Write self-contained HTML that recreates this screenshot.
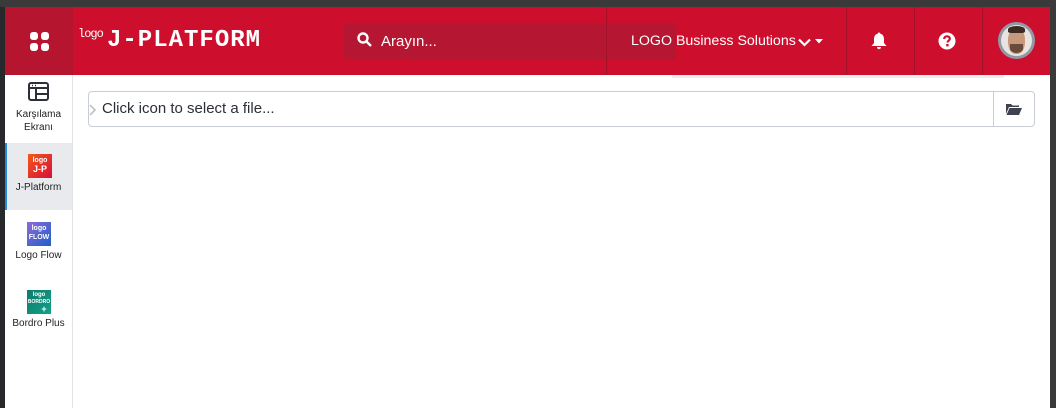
<!DOCTYPE html>
<html><head><meta charset="utf-8"><style>
*{margin:0;padding:0;box-sizing:border-box}
body{width:1056px;height:408px;overflow:hidden;background:#fff;font-family:"Liberation Sans",sans-serif;position:relative}
.abs{position:absolute}
</style></head><body>
<div class="abs" style="left:0;top:0;width:1056px;height:7px;background:#3a3a3a"></div>
<div class="abs" style="left:0;top:7px;width:5px;height:401px;background:#26282b"></div>
<div class="abs" style="left:1050px;top:7px;width:6px;height:401px;background:#3a3a3a"></div>
<!-- header -->
<div class="abs" style="left:5px;top:7px;width:1045px;height:68px;background:#cd0e2d"></div>
<div class="abs" style="left:5px;top:7px;width:68px;height:68px;background:#b5152f"></div>
<svg class="abs" style="left:30px;top:32px" width="19" height="19" viewBox="0 0 19 19" fill="#fff">
<rect x="0" y="0" width="8" height="8" rx="3"/><rect x="11" y="0" width="8" height="8" rx="3"/><rect x="0" y="11" width="8" height="8" rx="3"/><rect x="11" y="11" width="8" height="8" rx="3"/></svg>
<div class="abs" style="left:78px;top:27px;color:#fff;font-size:12px;font-family:'Liberation Mono',monospace;letter-spacing:-1px">logo</div>
<div class="abs" style="left:107px;top:27px;color:#fff;font-size:24px;font-weight:bold;font-family:'Liberation Mono',monospace;letter-spacing:1px;line-height:28px">J-PLATFORM</div>
<div class="abs" style="left:344px;top:23px;width:332px;height:36px;background:#b51632;border-radius:4px"></div>
<svg class="abs" style="left:357px;top:32px" width="15" height="15" viewBox="0 0 15 15" fill="none" stroke="#fff" stroke-width="2.4"><circle cx="6" cy="6" r="4.5"/><path d="M9.5 9.5L14 14"/></svg>
<div class="abs" style="left:381px;top:33px;color:#fff;font-size:15px">Arayın...</div>
<div class="abs" style="left:606px;top:7px;width:1px;height:68px;background:#a4102a"></div>
<div class="abs" style="left:846px;top:7px;width:1px;height:68px;background:#a4102a"></div>
<div class="abs" style="left:914px;top:7px;width:1px;height:68px;background:#a4102a"></div>
<div class="abs" style="left:982px;top:7px;width:1px;height:68px;background:#a4102a"></div>
<div class="abs" style="left:631px;top:33px;color:#fff;font-size:14.2px">LOGO Business Solutions</div>
<svg class="abs" style="left:798px;top:38px" width="13" height="9" viewBox="0 0 13 9" fill="none" stroke="#fff" stroke-width="2.2"><path d="M1 1.5L6.5 7L12 1.5"/></svg>
<svg class="abs" style="left:815px;top:39px" width="8" height="5" viewBox="0 0 8 5" fill="#fff"><path d="M0 0H8L4 4.5Z"/></svg>
<svg class="abs" style="left:871px;top:32px" width="16" height="18" viewBox="0 0 16 18" fill="#fff"><path d="M8 0.5C8.8 0.5 9.3 1.1 9.3 1.8C12 2.4 13 4.5 13 7.5V11L15.5 14H0.5L3 11V7.5C3 4.5 4 2.4 6.7 1.8C6.7 1.1 7.2 0.5 8 0.5Z"/><path d="M6 15H10C10 16.3 9.1 17.2 8 17.2S6 16.3 6 15Z"/></svg>
<svg class="abs" style="left:938px;top:32px" width="18" height="18" viewBox="0 0 18 18"><circle cx="9" cy="9" r="8.5" fill="#fff"/><path d="M6.2 7C6.2 5.3 7.4 4.3 9 4.3S11.8 5.3 11.8 6.8C11.8 8.6 9.5 8.8 9.5 10.5" fill="none" stroke="#cd0e2d" stroke-width="2.2"/><rect x="8.2" y="12" width="2.4" height="2.4" fill="#cd0e2d"/></svg>
<div class="abs" style="left:998px;top:22px;width:37px;height:37px;border-radius:50%;background:#8f9aa6;overflow:hidden">
<div class="abs" style="left:3px;top:3px;width:31px;height:31px;border-radius:50%;background:#e9e4e0"></div>
<div class="abs" style="left:10px;top:6px;width:17px;height:26px;border-radius:45%;background:#c8987c"></div>
<div class="abs" style="left:10px;top:4px;width:17px;height:7px;border-radius:50% 50% 20% 20%;background:#3b2b22"></div>
<div class="abs" style="left:12px;top:22px;width:13px;height:9px;border-radius:0 0 50% 50%;background:#6a4a38"></div>
</div>
<!-- faint text under header -->
<div class="abs" style="left:672px;top:75px;width:332px;height:3px;background:#eceef0"></div>
<!-- sidebar -->
<div class="abs" style="left:72px;top:75px;width:1px;height:333px;background:#e2e4e8"></div>
<svg class="abs" style="left:28px;top:82px" width="21" height="19" viewBox="0 0 21 19" fill="none" stroke="#2b3038" stroke-width="2"><rect x="1" y="1" width="19" height="17" rx="2"/><path d="M1 6H20M8 6V18M8 12H20"/><path d="M4 3.5H5M7 3.5H8" stroke-width="1.5"/></svg>
<div class="abs" style="left:5px;top:108px;width:67px;text-align:center;font-size:10px;line-height:13px;color:#222">Karşılama<br>Ekranı</div>
<div class="abs" style="left:5px;top:143px;width:67px;height:67px;background:#e8eaee"></div>
<div class="abs" style="left:5px;top:143px;width:2px;height:67px;background:#1f8ae6"></div>
<div class="abs" style="left:28px;top:154px;width:24px;height:24px;background:linear-gradient(135deg,#f05a1a,#d80d3a);color:#fff;font-size:7px;font-weight:bold;text-align:center;line-height:9px;padding-top:2px">logo<br><span style="font-size:9px">J-P</span></div>
<div class="abs" style="left:5px;top:182px;width:67px;text-align:center;font-size:10px;color:#222">J-Platform</div>
<div class="abs" style="left:27px;top:222px;width:24px;height:24px;background:linear-gradient(135deg,#8d6ad8,#1f5fc8);color:#fff;font-size:7px;font-weight:bold;text-align:center;line-height:9px;padding-top:2px">logo<br>FLOW</div>
<div class="abs" style="left:5px;top:250px;width:67px;text-align:center;font-size:10px;color:#222">Logo Flow</div>
<div class="abs" style="left:27px;top:290px;width:24px;height:24px;background:linear-gradient(135deg,#0e7a6c,#14a08a);color:#fff;font-size:6px;font-weight:bold;text-align:center;line-height:7px;padding-top:2px;overflow:hidden">logo<br><span style="font-size:5px">BORDRO</span><br><span style="font-size:9px;padding-left:10px">+</span></div>
<div class="abs" style="left:5px;top:318px;width:67px;text-align:center;font-size:10px;color:#222">Bordro Plus</div>
<!-- file input -->
<div class="abs" style="left:88px;top:91px;width:947px;height:36px;border:1px solid #c9ced6;border-radius:4px"></div>
<div class="abs" style="left:993px;top:92px;width:1px;height:34px;background:#c9ced6"></div>
<svg class="abs" style="left:89px;top:104px" width="8" height="12" viewBox="0 0 8 12" fill="none" stroke="#b8bcc4" stroke-width="1.5"><path d="M1 1L6 6L1 11"/></svg>
<div class="abs" style="left:102px;top:100px;font-size:15px;color:#2a2f36">Click icon to select a file...</div>
<svg class="abs" style="left:1006px;top:103px" width="16" height="12" viewBox="0 0 16 12" fill="#3d4450"><path d="M0 1H5L6.5 2.5H13V4H3L0 11Z"/><path d="M3.5 5H16L13 12H0.5Z"/></svg>
</body></html>
